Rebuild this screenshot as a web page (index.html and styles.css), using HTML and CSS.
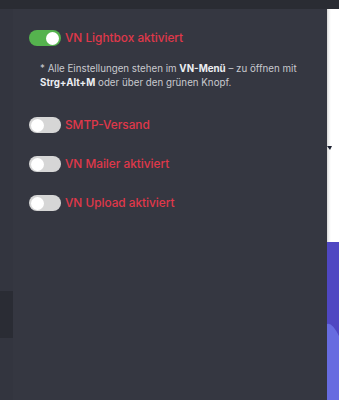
FILE: index.html
```html
<!DOCTYPE html>
<html lang="de">
<head>
<meta charset="utf-8">
<link rel="stylesheet" href="styles.css">
</head>
<body>
<div class="topbar"></div>
<div class="layout">
  <div class="rail"><div class="rail-block"></div></div>
  <div class="panel">
    <div class="setting">
      <span class="toggle on"><span class="knob"></span></span>
      <span class="label">VN Lightbox aktiviert</span>
    </div>
    <p class="note">* Alle Einstellungen stehen im <b>VN-Menü</b> – zu öffnen mit <b>Strg+Alt+M</b> oder über den grünen Knopf.</p>
    <div class="setting">
      <span class="toggle"><span class="knob"></span></span>
      <span class="label">SMTP-Versand</span>
    </div>
    <div class="setting">
      <span class="toggle"><span class="knob"></span></span>
      <span class="label">VN Mailer aktiviert</span>
    </div>
    <div class="setting">
      <span class="toggle"><span class="knob"></span></span>
      <span class="label">VN Upload aktiviert</span>
    </div>
  </div>
  <div class="side">
    <div class="side-white"><span class="caret"></span></div>
    <div class="side-hero">
      <svg class="wave" width="12" height="78" viewBox="0 0 12 78"><path d="M0 2 Q5 0 12 14 L12 78 L0 78 Z" fill="#676ce0"/></svg>
    </div>
  </div>
</div>
</body>
</html>
```

FILE: styles.css
```css
html, body {
  margin: 0;
  padding: 0;
  width: 339px;
  height: 400px;
  overflow: hidden;
  background: #353741;
  font-family: Inter, "Noto Sans", sans-serif;
}
.topbar {
  height: 9px;
  background: #2a2c33;
}
.layout {
  display: flex;
  height: 391px;
}
.rail {
  width: 13px;
  background: #33353f;
  flex: none;
  display: flex;
  flex-direction: column;
  padding-top: 282px;
  box-sizing: border-box;
}
.rail-block {
  height: 47px;
  background: #2a2c34;
}
.panel {
  width: 314px;
  flex: none;
  background: #353741;
  padding: 21px 0 0 16px;
  box-sizing: border-box;
}
.setting {
  display: flex;
  align-items: center;
  gap: 4px;
  height: 16px;
  margin-bottom: 23px;
}
.toggle {
  width: 32px;
  height: 16px;
  border-radius: 8px;
  background: #d6d6d6;
  display: flex;
  align-items: center;
  padding: 0 2px;
  box-sizing: border-box;
  flex: none;
}
.toggle .knob {
  width: 13px;
  height: 13px;
  border-radius: 50%;
  background: #fff;
}
.toggle.on {
  background: #55b34e;
  justify-content: flex-end;
}
.label {
  color: #e0384a;
  font-size: 11.8px;
  font-weight: 500;
}
.note {
  margin: -7px 0 27px 11px;
  color: #c9cacf;
  font-size: 9.75px;
  line-height: 14px;
  width: 262px;
}
.note b {
  color: #eceef2;
  font-weight: 700;
}
.side {
  flex: 1;
  display: flex;
  flex-direction: column;
}
.side-white {
  height: 233px;
  background: linear-gradient(to right, #d8d8d8 0, #f4f4f4 2px, #ffffff 4px);
  position: relative;
}
.caret {
  position: absolute;
  left: 0;
  top: 137px;
  width: 0;
  height: 0;
  border-left: 3px solid transparent;
  border-right: 2px solid transparent;
  border-top: 4px solid #1c2030;
}
.side-hero {
  flex: 1;
  background: #4f47c2;
  display: flex;
  flex-direction: column;
  justify-content: flex-end;
}
.wave {
  display: block;
}
```
